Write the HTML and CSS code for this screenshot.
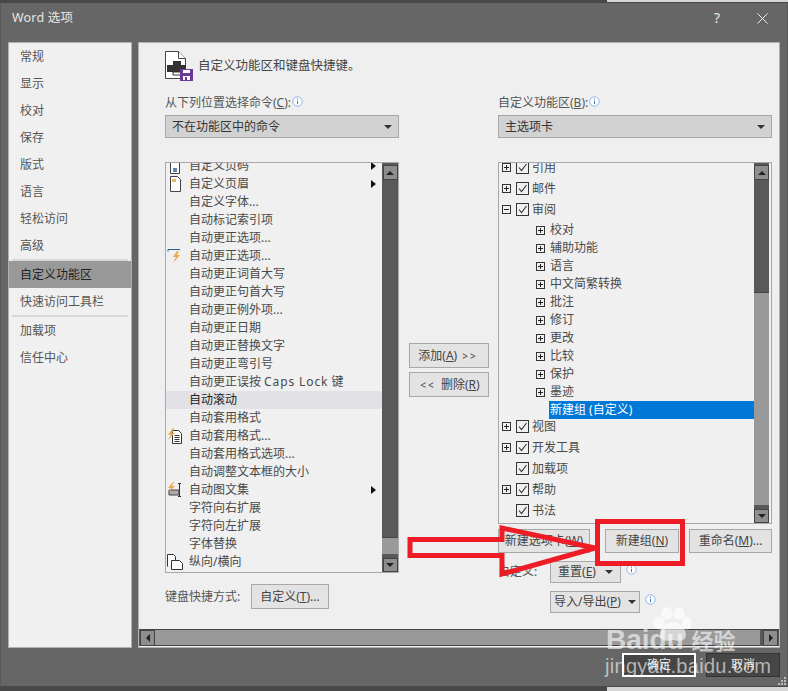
FILE: index.html
```html
<!DOCTYPE html>
<html lang="zh-CN">
<head>
<meta charset="utf-8">
<title>Word 选项</title>
<link rel="stylesheet" href="styles.css">
</head>
<body>
<svg class="defs" width="0" height="0" aria-hidden="true">
  <symbol id="chk" viewBox="0 0 13 13"><rect x=".5" y=".5" width="12" height="12" fill="none" stroke="#333"/><path d="M3 6.5l2.5 3L10.5 3" fill="none" stroke="#333" stroke-width="1.1"/></symbol>
  <symbol id="plus" viewBox="0 0 9 9"><rect x=".5" y=".5" width="8" height="8" fill="none" stroke="#333"/><path d="M2 4.5h5M4.5 2v5" stroke="#222"/></symbol>
  <symbol id="minus" viewBox="0 0 9 9"><rect x=".5" y=".5" width="8" height="8" fill="none" stroke="#333"/><path d="M2 4.5h5" stroke="#222"/></symbol>
  <symbol id="info" viewBox="0 0 11 11"><circle cx="5.5" cy="5.5" r="4.7" fill="#fff" stroke="#8fb4e3"/><path d="M5.5 2.6v1.2M5.5 4.8v3.4" stroke="#3f7fc9"/></symbol>
</svg>
<div class="strip strip-top"><span class="strip-dark"></span><span class="strip-light"></span></div>
<div class="window">
  <header class="titlebar">
    <span class="title">Word 选项</span>
    <span class="title-actions">
      <span class="help">?</span>
      <svg class="close" width="11" height="11" viewBox="0 0 11 11"><path d="M.5.5l10 10M10.5.5l-10 10" stroke="#eee"/></svg>
    </span>
  </header>
  <div class="content">
    <nav class="sidebar">
      <div class="nav-item">常规</div>
      <div class="nav-item">显示</div>
      <div class="nav-item">校对</div>
      <div class="nav-item">保存</div>
      <div class="nav-item">版式</div>
      <div class="nav-item">语言</div>
      <div class="nav-item">轻松访问</div>
      <div class="nav-item">高级</div>
      <div class="nav-sep"></div>
      <div class="nav-item nav-active">自定义功能区</div>
      <div class="nav-item">快速访问工具栏</div>
      <div class="nav-sep"></div>
      <div class="nav-item">加载项</div>
      <div class="nav-item">信任中心</div>
    </nav>
    <main class="panel">
      <div class="panel-body">
        <div class="heading">
          <svg class="heading-icon" width="28" height="32" viewBox="0 0 28 32">
            <path d="M.5 2.500h13l7 7v20H.5z" fill="#fff" stroke="#444"/>
            <path d="M13.500 2.500v7h7" fill="#fff" stroke="#444"/>
            <path d="M8 12h8v4H8zM2 16h19v7H2z" fill="#333"/>
            <path d="M8 23h8v3H8z" fill="#fff" stroke="#333"/>
            <rect x="15" y="20" width="13" height="12" fill="#6b3a96"/>
            <rect x="18" y="21" width="7" height="3" fill="#fff"/>
            <rect x="18" y="27" width="7" height="4" fill="#fff"/>
            <rect x="20" y="28" width="2" height="3" fill="#6b3a96"/>
          </svg>
          <span class="heading-text">自定义功能区和键盘快捷键。</span>
        </div>
        <div class="config">
          <section class="col col-left">
            <div class="label">从下列位置选择命令(<u>C</u>):<svg class="info" width="11" height="11"><use href="#info"/></svg></div>
            <div class="select"><span>不在功能区中的命令</span><i class="caret"></i></div>
            <div class="listbox">
              <div class="rows cmd-rows">
                <div class="cmd"><svg class="cmd-icon" width="16" height="16" viewBox="0 0 16 16"><path d="M3.500.5h9v15h-9z" fill="#fff" stroke="#444"/><path d="M6 11h4M6 13h4M7 10v4M9 10v4" stroke="#2b5d9b"/></svg>自定义页码<i class="sub"></i></div>
                <div class="cmd"><svg class="cmd-icon" width="16" height="16" viewBox="0 0 16 16"><path d="M3.500.5h7l3 3v12h-10z" fill="#fff" stroke="#444"/><rect x="5" y="3" width="4" height="3" fill="#e9b66b"/></svg>自定义页眉<i class="sub"></i></div>
                <div class="cmd">自定义字体...</div>
                <div class="cmd">自动标记索引项</div>
                <div class="cmd">自动更正选项...</div>
                <div class="cmd"><svg class="cmd-icon" width="16" height="16" viewBox="0 0 16 16"><path d="M1 1.500h12M1 1.500v2" stroke="#2b5d9b" fill="none"/><path d="M10 3L6 9h3l-3 6 7-8h-3l2-4z" fill="#e9a94f"/></svg>自动更正选项...</div>
                <div class="cmd">自动更正词首大写</div>
                <div class="cmd">自动更正句首大写</div>
                <div class="cmd">自动更正例外项...</div>
                <div class="cmd">自动更正日期</div>
                <div class="cmd">自动更正替换文字</div>
                <div class="cmd">自动更正弯引号</div>
                <div class="cmd">自动更正误按 <span class="latin">Caps Lock</span> 键</div>
                <div class="cmd cmd-hover">自动滚动</div>
                <div class="cmd">自动套用格式</div>
                <div class="cmd"><svg class="cmd-icon" width="16" height="16" viewBox="0 0 16 16"><path d="M5.500 2.500h6l3 3v10h-9z" fill="#fff" stroke="#333"/><path d="M7.500 7.500h5M7.500 9.500h5M7.500 11.500h5M7.500 13.500h5" stroke="#333"/><path d="M6 0L1 7h3l-3 5 7-7H5l2-5z" fill="#e9a94f"/></svg>自动套用格式...</div>
                <div class="cmd">自动套用格式选项...</div>
                <div class="cmd">自动调整文本框的大小</div>
                <div class="cmd"><svg class="cmd-icon" width="16" height="16" viewBox="0 0 16 16"><path d="M2 13V8h10v5z" fill="#aaa" stroke="#444"/><path d="M12.500 2v13M11 1.500h3M11 14.500h3" stroke="#333" fill="none"/><path d="M6 0L1 6h3L2 10l6-6H5l2-4z" fill="#e9a94f"/></svg>自动图文集<i class="sub"></i></div>
                <div class="cmd">字符向右扩展</div>
                <div class="cmd">字符向左扩展</div>
                <div class="cmd">字体替换</div>
                <div class="cmd"><svg class="cmd-icon" width="16" height="16" viewBox="0 0 16 16"><path d="M.5 12.500V.5h6l2 2v4" fill="#fff" stroke="#333"/><path d="M4.500 6.500h8l3 3v6h-11z" fill="#fff" stroke="#333"/></svg>纵向/横向</div>
                <div class="cmd"><svg class="cmd-icon" width="16" height="16" viewBox="0 0 16 16"><path d="M.5 3.500h15v12H.5z" fill="#fff" stroke="#333"/></svg></div>
              </div>
              <div class="vscroll">
                <div class="sb-btn"><i class="tri-up"></i></div>
                <div class="sb-track"></div>
                <div class="sb-thumb sb-thumb-left"></div>
                <div class="sb-gap"></div>
                <div class="sb-btn sb-btn-down"><i class="tri-down"></i></div>
              </div>
            </div>
            <div class="shortcut">
              <span class="shortcut-label">键盘快捷方式:</span>
              <button class="btn btn-custom"><span>自定义(<u>T</u>)...</span></button>
            </div>
          </section>
          <section class="col col-mid">
            <button class="btn btn-mid"><span>添加(<u>A</u>) <span class="chev">&gt;&gt;</span></span></button>
            <button class="btn btn-mid"><span><span class="chev">&lt;&lt;</span> 删除(<u>R</u>)</span></button>
          </section>
          <section class="col col-right">
            <div class="label">自定义功能区(<u>B</u>):<svg class="info" width="11" height="11"><use href="#info"/></svg></div>
            <div class="select"><span>主选项卡</span><i class="caret"></i></div>
            <div class="listbox listbox-right">
              <div class="rows tree-rows">
                <div class="top"><svg class="exp" width="9" height="9"><use href="#plus"/></svg><svg class="chk" width="13" height="13"><use href="#chk"/></svg>引用</div>
                <div class="top"><svg class="exp" width="9" height="9"><use href="#plus"/></svg><svg class="chk" width="13" height="13"><use href="#chk"/></svg>邮件</div>
                <div class="top"><svg class="exp" width="9" height="9"><use href="#minus"/></svg><svg class="chk" width="13" height="13"><use href="#chk"/></svg>审阅</div>
                <div class="child child-first"><svg class="exp" width="9" height="9"><use href="#plus"/></svg>校对</div>
                <div class="child"><svg class="exp" width="9" height="9"><use href="#plus"/></svg>辅助功能</div>
                <div class="child"><svg class="exp" width="9" height="9"><use href="#plus"/></svg>语言</div>
                <div class="child"><svg class="exp" width="9" height="9"><use href="#plus"/></svg>中文简繁转换</div>
                <div class="child"><svg class="exp" width="9" height="9"><use href="#plus"/></svg>批注</div>
                <div class="child"><svg class="exp" width="9" height="9"><use href="#plus"/></svg>修订</div>
                <div class="child"><svg class="exp" width="9" height="9"><use href="#plus"/></svg>更改</div>
                <div class="child"><svg class="exp" width="9" height="9"><use href="#plus"/></svg>比较</div>
                <div class="child"><svg class="exp" width="9" height="9"><use href="#plus"/></svg>保护</div>
                <div class="child"><svg class="exp" width="9" height="9"><use href="#plus"/></svg>墨迹</div>
                <div class="child-selected">新建组 (自定义)</div>
                <div class="top top-after"><svg class="exp" width="9" height="9"><use href="#plus"/></svg><svg class="chk" width="13" height="13"><use href="#chk"/></svg>视图</div>
                <div class="top"><svg class="exp" width="9" height="9"><use href="#plus"/></svg><svg class="chk" width="13" height="13"><use href="#chk"/></svg>开发工具</div>
                <div class="top top-noexp"><svg class="chk" width="13" height="13"><use href="#chk"/></svg>加载项</div>
                <div class="top"><svg class="exp" width="9" height="9"><use href="#plus"/></svg><svg class="chk" width="13" height="13"><use href="#chk"/></svg>帮助</div>
                <div class="top top-noexp"><svg class="chk" width="13" height="13"><use href="#chk"/></svg>书法</div>
              </div>
              <div class="vscroll vscroll-right">
                <div class="sb-btn"><i class="tri-up"></i></div>
                <div class="sb-track"></div>
                <div class="sb-thumb sb-thumb-right"></div>
                <div class="sb-gap"></div>
                <div class="sb-btn sb-btn-down"><i class="tri-down"></i></div>
              </div>
            </div>
            <div class="tree-actions">
              <button class="btn btn-tab"><span>新建选项卡(<u>W</u>)</span></button>
              <button class="btn btn-group"><span>新建组(<u>N</u>)</span></button>
              <button class="btn btn-rename"><span>重命名(<u>M</u>)...</span></button>
            </div>
            <div class="reset-row">
              <span class="reset-label">自定义:</span>
              <button class="btn btn-reset"><span>重置(<u>E</u>)</span><i class="caret"></i></button>
              <svg class="info info-reset" width="11" height="11"><use href="#info"/></svg>
            </div>
            <div class="import-row">
              <button class="btn btn-import"><span>导入/导出(<u>P</u>)</span><i class="caret"></i></button>
              <svg class="info info-reset" width="11" height="11"><use href="#info"/></svg>
            </div>
          </section>
        </div>
      </div>
      <div class="hscroll">
        <div class="hs-btn"><i class="tri-left"></i></div>
        <div class="hs-thumb"></div>
        <div class="hs-btn hs-btn-right"><i class="tri-right"></i></div>
      </div>
    </main>
  </div>
  <footer class="footer">
    <button class="foot-btn foot-ok">确定</button>
    <button class="foot-btn">取消</button>
  </footer>
</div>
<div class="strip strip-bottom"><span class="strip-dark"></span><span class="strip-light"></span></div>

<svg class="annot" width="290" height="60" viewBox="0 0 290 60" aria-hidden="true">
  <path d="M10 20.500H102V9L195 29 102 55V36.500H10z" fill="none" stroke="#ee1c25" stroke-width="5"/>
  <rect x="197.500" y="2.500" width="85" height="42" fill="none" stroke="#ee1c25" stroke-width="5"/>
</svg>
<svg class="grip" width="9" height="9" viewBox="0 0 9 9" aria-hidden="true">
  <path d="M7 0h2v2H7zM4 3h2v2H4zM7 3h2v2H7zM1 6h2v2H1zM4 6h2v2H4zM7 6h2v2H7z" fill="#bbb"/>
</svg>
<div class="watermark" aria-hidden="true">
  <svg class="paw" width="41" height="37" viewBox="0 0 41 37">
    <g fill="#fff" fill-opacity=".6">
      <ellipse cx="7" cy="16" rx="5.500" ry="6.500"/><ellipse cx="15" cy="6.500" rx="5.500" ry="6.500"/><ellipse cx="27" cy="6.500" rx="5.500" ry="6.500"/><ellipse cx="35" cy="16" rx="5" ry="6.500"/>
      <path d="M21 15c7 0 13 6 13 13 0 7-8 6-13 5-5 1-13 2-13-5 0-7 6-13 13-13z"/>
    </g>
  </svg>
  <div class="wm-brand">Baidu <span class="wm-cn">经验</span></div>
  <div class="wm-url">jingyan.baidu.com</div>
</div>
</body>
</html>
```
FILE: styles.css
```css
* { box-sizing: border-box; }
html, body { margin: 0; padding: 0; width: 788px; height: 691px; overflow: hidden; }
body {
  position: relative;
  background: #5a5a5a;
  color: #4a4a4a;
  font: 12px/18px "Noto Sans", "Noto Sans CJK SC", sans-serif;
}
.defs { position: absolute; }
u { text-decoration: underline; text-underline-offset: 1px; }

.strip { display: flex; height: 3px; }
.strip-dark { width: 607px; background: #484848; }
.strip-light { flex: 1; background: #d6d6d6; }
.strip-top .strip-light { background: linear-gradient(#d6d6d6 0 2px, #484848 2px); }
.strip-bottom { height: 4px; }

.window {
  width: 786px;
  height: 684px;
  margin-left: 1px;
  background: #666;
  display: flex;
  flex-direction: column;
}
.titlebar {
  height: 39px;
  padding: 0 19px 9px 11px;
  display: flex;
  align-items: center;
  justify-content: space-between;
  color: #e6e6e6;
}
.title { font-size: 12.500px; letter-spacing: .2px; }
.title-actions { display: flex; align-items: center; gap: 37px; }
.help { font-size: 14px; }

.content { height: 606px; padding-left: 7px; display: flex; gap: 6px; }

.sidebar {
  width: 124px;
  height: 606px;
  background: #f0f0f0;
  border: 1px solid #b0b0b0;
}
.nav-item { height: 27px; line-height: 27px; padding-left: 11px; color: #555; }
.nav-sep { height: 2px; margin: 0 3px; background: #d8d8d8; }
.nav-active { background: #999; color: #222; }

.panel {
  width: 642px;
  height: 606px;
  background: #efefef;
  border: 1px solid #b0b0b0;
  display: flex;
  flex-direction: column;
}
.panel-body { flex: 1; padding: 6px 0 0 26px; min-height: 0; }
.heading { height: 31px; display: flex; align-items: center; gap: 5px; }
.heading-icon { flex: none; }
.heading-text { font-size: 12.500px; color: #444; margin-top: 2px; }

.config { display: flex; margin-top: 14px; }
.col-left { width: 234px; }
.col-mid {
  width: 99px;
  padding: 249px 0 0 10px;
  display: flex;
  flex-direction: column;
  gap: 4px;
}
.col-right { width: 274px; }

.label { height: 18px; line-height: 18px; display: flex; align-items: center; color: #555; }
.info { margin: -4px 0 0 1px; flex: none; }
.select {
  margin-top: 3px;
  height: 23px;
  padding: 0 6px;
  background: #d2d2d2;
  border: 1px solid #a8a8a8;
  display: flex;
  align-items: center;
  justify-content: space-between;
  color: #333;
}
.caret { width: 0; height: 0; border: 4px solid transparent; border-top: 4px solid #333; border-bottom: 0; display: block; }

.listbox {
  margin-top: 24px;
  height: 411px;
  border: 1px solid #a8a8a8;
  background: #f0f0f0;
  overflow: hidden;
  display: flex;
}
.listbox-right { height: 362px; }
.rows { flex: 1; min-width: 0; overflow: hidden; }
.cmd-rows { margin-top: -6px; }
.cmd {
  height: 18px;
  padding-left: 23px;
  position: relative;
  white-space: nowrap;
  color: #4a4a4a;
  display: flex;
  align-items: center;
}
.cmd-hover { background: #e1e1e6; color: #222; }
.cmd-icon { position: absolute; left: 1px; top: 1px; }
.latin { letter-spacing: .9px; margin: 0 3px; }
.sub {
  position: absolute;
  right: 6px;
  top: 5px;
  width: 0; height: 0;
  border: 4px solid transparent;
  border-left: 5px solid #111;
  border-right: 0;
}

.vscroll {
  width: 16px;
  flex: none;
  background: #595959;
  padding-top: 2px;
  display: flex;
  flex-direction: column;
  align-items: center;
}
.vscroll-right { width: 15px; margin-right: 2px; }
.sb-btn {
  width: 15px;
  height: 15px;
  background: #8e8e8e;
  border: 1px solid #444;
  display: flex;
  align-items: center;
  justify-content: center;
  flex: none;
}
.sb-btn-down { height: 14px; }
.sb-track { flex: 1; }
.sb-thumb { width: 100%; background: #999; border-top: 1px solid #444; flex: none; }
.sb-thumb-left { height: 17px; }
.sb-thumb-right { height: 213px; }
.sb-gap { height: 4px; flex: none; }
.tri-up, .tri-down, .tri-left, .tri-right { display: block; width: 0; height: 0; border: 4px solid transparent; }
.tri-up { border-bottom: 4px solid #222; border-top: 0; }
.tri-down { border-top: 4px solid #222; border-bottom: 0; }
.tri-left { border-right: 4px solid #222; border-left: 0; }
.tri-right { border-left: 4px solid #222; border-right: 0; }

.shortcut { margin-top: 11px; display: flex; align-items: center; }
.shortcut-label { width: 86px; color: #555; }

.btn {
  height: 24px;
  padding: 0;
  background: #e3e3e3;
  border: 1px solid #a8a8a8;
  color: #444;
  font: inherit;
  white-space: nowrap;
  display: flex;
  align-items: center;
  justify-content: center;
}
.btn-custom { width: 78px; height: 25px; }
.btn-mid { width: 80px; height: 25px; }
.chev { letter-spacing: 2px; margin: 0 2px; font-size: 10px; }

.tree-rows { margin-top: -6px; }
.top { height: 21px; display: flex; align-items: center; padding-left: 3px; color: #4a4a4a; }
.top-noexp { padding-left: 17px; }
.top-after { margin-top: -3px; }
.exp { flex: none; margin-right: 5px; }
.chk { flex: none; margin-right: 3px; }
.child { height: 18px; display: flex; align-items: center; padding-left: 37px; }
.child-first { margin-top: 1px; }
.child-selected {
  height: 18px;
  margin-left: 50px;
  padding-left: 1px;
  background: #0078d7;
  color: #fff;
}

.tree-actions { margin-top: 5px; display: flex; }
.btn-tab { width: 92px; }
.btn-group { width: 74px; margin-left: 15px; }
.btn-rename { width: 83px; margin-left: 10px; }

.reset-row { margin-top: 8px; display: flex; align-items: center; height: 22px; }
.reset-label { width: 52px; color: #555; }
.btn-reset { width: 71px; height: 22px; gap: 9px; }
.info-reset { margin: -6px 0 0 5px; }
.import-row { margin: 8px 0 0 52px; display: flex; align-items: center; }
.btn-import { width: 90px; height: 22px; gap: 7px; }

.hscroll {
  height: 17px;
  margin-bottom: 1px;
  background: #595959;
  border-top: 1px solid #444;
  padding: 0 1px;
  display: flex;
  flex: none;
}
.hs-btn {
  width: 15px;
  background: #8e8e8e;
  border: 1px solid #444;
  display: flex;
  align-items: center;
  justify-content: center;
  flex: none;
}
.hs-thumb { width: 606px; background: #999; border-bottom: 1px solid #444; }
.hs-btn-right { margin-left: 3px; }

.footer {
  flex: 1;
  display: flex;
  justify-content: flex-end;
  align-items: flex-start;
  gap: 10px;
  padding: 5px 7px 0 0;
  box-shadow: inset 0 -1px 0 #4a4a4a;
}
.foot-btn {
  width: 74px;
  height: 24px;
  background: #464646;
  border: 1px solid #333;
  color: #e8e8e8;
  font: inherit;
  padding: 0;
}
.foot-ok { border: 2px solid #fff; }

.annot { position: absolute; left: 400px; top: 519px; }
.grip { position: absolute; left: 777px; top: 677px; }
.watermark {
  position: absolute;
  left: 600px;
  top: 606px;
  width: 188px;
  height: 80px;
  color: rgba(255, 255, 255, .6);
  font-family: "Liberation Sans", "Noto Sans CJK SC", sans-serif;
}
.paw { position: absolute; left: 52px; top: 1px; }
.wm-brand { position: absolute; left: 6px; top: 19px; font: bold 28px/30px "Liberation Sans", "Noto Sans CJK SC", sans-serif; white-space: nowrap; }
.wm-cn { font-size: 22px; }
.wm-url { position: absolute; left: 5px; top: 48px; font-size: 20px; line-height: 24px; letter-spacing: .3px; white-space: nowrap; }
```
